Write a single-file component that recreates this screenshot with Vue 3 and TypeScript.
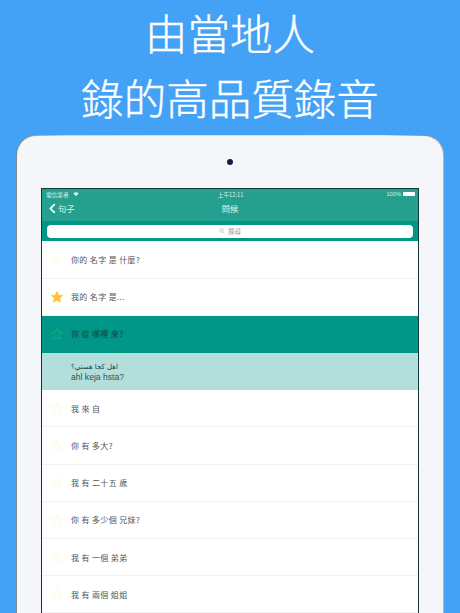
<script setup lang="ts">
interface Row { text: string; fav?: boolean; active?: boolean; detail?: boolean; arabic?: string; latin?: string }
const rows: Row[] = [
  { text: '你的 名字 是 什麼?' },
  { text: '我的 名字 是...', fav: true },
  { text: '你 從 哪裡 來?', active: true },
  { text: '', detail: true, arabic: 'اهل كجا هستي؟', latin: 'ahl keja hsta?' },
  { text: '我 來 自' },
  { text: '你 有 多大?' },
  { text: '我 有 二十五 歲' },
  { text: '你 有 多少個 兄妹?' },
  { text: '我 有 一個 弟弟' },
  { text: '我 有 兩個 姐姐' },
]
const star = 'M12 2.6l2.9 6.2 6.7.8-5 4.6 1.4 6.7-6-3.4-6 3.4 1.4-6.7-5-4.6 6.7-.8z'
</script>

<template>
  <div class="page">
    <h1 class="headline">
      <span>由當地人</span>
      <span>錄的高品質錄音</span>
    </h1>
    <div class="tablet">
      <div class="camera-zone"><i class="camera"></i></div>
      <div class="screen">
        <div class="status">
          <span class="status-left">
            電信業者
            <svg class="wifi" viewBox="0 0 12 9"><path d="M6 8.5 .6 3a7.6 7.6 0 0 1 10.8 0z" fill="#d6efe9"/></svg>
          </span>
          <span class="status-mid">上午12:11</span>
          <span class="status-right">100%<i class="battery"></i></span>
        </div>
        <div class="nav">
          <span class="back">
            <svg class="chev" viewBox="0 0 8 12"><path d="M6.6 1 1.6 6l5 5" fill="none" stroke="#fff" stroke-width="1.9"/></svg>
            句子
          </span>
          <span class="nav-title">問候</span>
        </div>
        <div class="search-wrap">
          <div class="search">
            <svg class="glass" viewBox="0 0 10 10"><circle cx="4" cy="4" r="2.9" fill="none" stroke="#a5a5a5" stroke-width="1"/><path d="M6.2 6.2 9 9" stroke="#a5a5a5" stroke-width="1"/></svg>
            搜尋
          </div>
        </div>
        <div class="list">
          <div v-for="(r, i) in rows" :key="i" class="row" :class="{ active: r.active, detail: r.detail }">
            <template v-if="r.detail">
              <div class="detail-text">
                <div class="arabic">{{ r.arabic }}</div>
                <div class="latin">{{ r.latin }}</div>
              </div>
            </template>
            <template v-else>
              <svg class="star" :class="{ fav: r.fav }" viewBox="0 0 24 24"><path :d="star"/></svg>
              <span class="phrase">{{ r.text }}</span>
            </template>
          </div>
        </div>
      </div>
    </div>
  </div>
</template>

<style scoped>
.page {
  width: 460px;
  height: 613px;
  overflow: hidden;
  background: #43a2f6;
  font-family: "Noto Sans CJK TC", "Liberation Sans", sans-serif;
  box-sizing: border-box;
}
.headline {
  margin: 0;
  padding-top: 0;
  height: 135px;
  box-sizing: border-box;
  display: flex;
  flex-direction: column;
  align-items: center;
  color: #fff;
  font-size: 42.5px;
  font-weight: 300;
  -webkit-text-stroke: 0.4px #fff;
  line-height: 64.5px;
}
.headline span { display: block; }
.tablet {
  margin: 0 16px;
  height: 478px;
  box-sizing: border-box;
  padding: 0 24px;
  border: 1.5px solid transparent;
  border-bottom: 0;
  border-radius: 20px 20px 0 0;
  background:
    linear-gradient(#f4f6f9, #f4f6f9) padding-box,
    linear-gradient(90deg, #84888e 0, #d3d7dc 12%, #e2e5e9 86%, #8e9197 96%, #b5b8bc 100%) border-box;
}
.camera-zone {
  height: 51.5px;
  display: flex;
  align-items: center;
  justify-content: center;
}
.camera {
  display: block;
  width: 6px;
  height: 6px;
  border-radius: 50%;
  background: #1c1f3c;
}
.screen {
  border: 1px solid #16363b;
  border-bottom: 0;
  background: #fff;
  height: 440px;
}
.status {
  height: 13px;
  box-sizing: border-box;
  padding: 0 3px 2px 4px;
  background: #26a08e;
  color: #d6efe9;
  font-size: 5.7px;
  display: grid;
  grid-template-columns: 1fr auto 1fr;
  align-items: center;
}
.status-left { display: flex; align-items: center; gap: 4px; }
.wifi { width: 6px; height: 4.5px; }
.status-right { display: flex; align-items: center; justify-content: flex-end; gap: 2px; font-family: "Liberation Sans", sans-serif; }
.battery { display: block; width: 12px; height: 4.5px; background: #fff; border-radius: 1px; }
.nav {
  position: relative;
  height: 19px;
  box-sizing: border-box;
  padding-bottom: 6px;
  background: #26a08e;
  color: #e4f4f0;
  font-size: 8.3px;
  display: flex;
  align-items: center;
  justify-content: center;
}
.back {
  position: absolute;
  left: 7px;
  top: 0;
  bottom: 6px;
  display: flex;
  align-items: center;
  gap: 2px;
}
.chev { width: 7px; height: 11px; }
.search-wrap {
  height: 20px;
  box-sizing: border-box;
  background: #009688;
  padding: 4px 5px 2px 5px;
}
.search {
  height: 13.5px;
  background: #fff;
  border-radius: 4px;
  color: #9a9a9a;
  font-size: 6.5px;
  display: flex;
  align-items: center;
  justify-content: center;
  gap: 3px;
}
.glass { width: 6px; height: 6px; }
.list { padding-top: 1px; }
.row {
  height: 37.2px;
  box-sizing: border-box;
  display: flex;
  align-items: center;
  padding-left: 8px;
  border-bottom: 1px solid #f1f1f1;
  color: #555;
  font-size: 8px;
  letter-spacing: .35px;
}
.row.active {
  background: #009688;
  color: #11433f;
  border-bottom-color: #009688;
}
.row.detail {
  background: #b2dfdb;
  border-bottom-color: #b2dfdb;
  padding-left: 29px;
  color: #263a38;
  letter-spacing: 0;
}
.star {
  width: 14px;
  height: 14px;
  margin-right: 7px;
  fill: #fffef6;
  stroke: #fbf8de;
  stroke-width: 1.2;
}
.star.fav { fill: #fdc32b; stroke: #fdc32b; }
.active .star { fill: none; stroke: #2fae84; }
.detail-text { line-height: 10px; padding-top: 1px; }
.arabic {
  font-family: "DejaVu Sans", sans-serif;
  font-size: 7px;
  direction: rtl;
  text-align: left;
  unicode-bidi: plaintext;
}
.latin {
  font-family: "Liberation Sans", sans-serif;
  font-size: 8.6px;
  font-weight: 400;
  color: #33504d;
}
</style>

<style>
html, body { margin: 0; padding: 0; background: #43a2f6; }
</style>
